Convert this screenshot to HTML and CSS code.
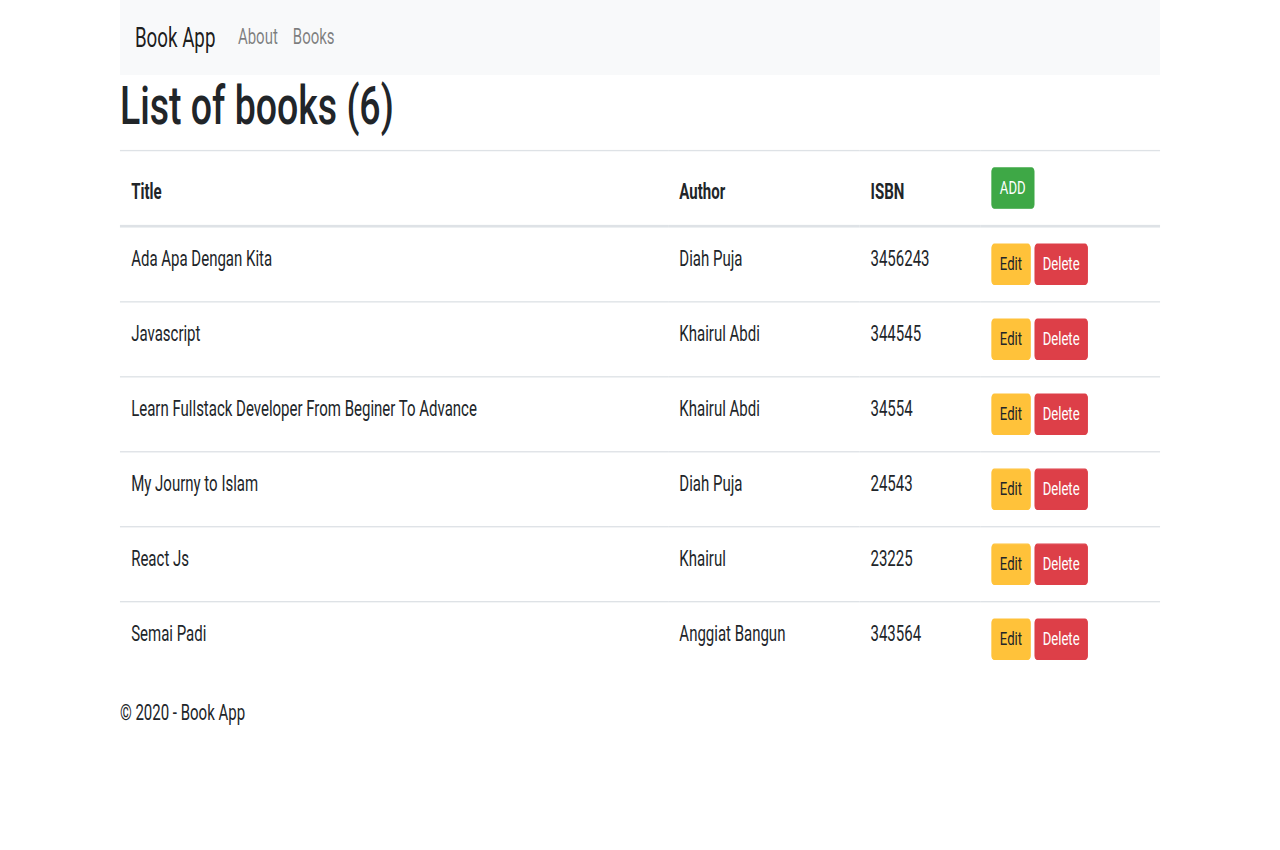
FILE: index.html
```html
<!DOCTYPE html>
<html lang="en">
<head>
<meta charset="utf-8">
<title>Book App</title>
<link rel="stylesheet" href="styles.css">
</head>
<body>
<div class="frame">
<div class="screen">
  <div class="container">
    <nav class="navbar">
      <a class="brand" href="#">Book App</a>
      <a class="nav-link" href="#">About</a>
      <a class="nav-link" href="#">Books</a>
    </nav>
    <h1 class="page-title">List of books (6)</h1>
    <table class="table">
      <thead>
        <tr>
          <th class="col-title">Title</th>
          <th class="col-author">Author</th>
          <th class="col-isbn">ISBN</th>
          <th class="col-actions"><button class="btn btn-success">ADD</button></th>
        </tr>
      </thead>
      <tbody>
        <tr>
          <td>Ada Apa Dengan Kita</td>
          <td>Diah Puja</td>
          <td>3456243</td>
          <td><div class="actions"><button class="btn btn-warning">Edit</button><button class="btn btn-danger">Delete</button></div></td>
        </tr>
        <tr>
          <td>Javascript</td>
          <td>Khairul Abdi</td>
          <td>344545</td>
          <td><div class="actions"><button class="btn btn-warning">Edit</button><button class="btn btn-danger">Delete</button></div></td>
        </tr>
        <tr>
          <td>Learn Fullstack Developer From Beginer To Advance</td>
          <td>Khairul Abdi</td>
          <td>34554</td>
          <td><div class="actions"><button class="btn btn-warning">Edit</button><button class="btn btn-danger">Delete</button></div></td>
        </tr>
        <tr>
          <td>My Journy to Islam</td>
          <td>Diah Puja</td>
          <td>24543</td>
          <td><div class="actions"><button class="btn btn-warning">Edit</button><button class="btn btn-danger">Delete</button></div></td>
        </tr>
        <tr>
          <td>React Js</td>
          <td>Khairul</td>
          <td>23225</td>
          <td><div class="actions"><button class="btn btn-warning">Edit</button><button class="btn btn-danger">Delete</button></div></td>
        </tr>
        <tr>
          <td>Semai Padi</td>
          <td>Anggiat Bangun</td>
          <td>343564</td>
          <td><div class="actions"><button class="btn btn-warning">Edit</button><button class="btn btn-danger">Delete</button></div></td>
        </tr>
      </tbody>
    </table>
    <footer class="footer">&copy; 2020 - Book App</footer>
  </div>
</div>
</div>
</body>
</html>
```

FILE: styles.css
```css
* { box-sizing: border-box; }

html {
  overflow: hidden;
}

body {
  margin: 0;
  padding: 0;
  background: #fff;
}

.frame {
  width: 1280px;
  height: 850px;
  overflow: hidden;
}

/* The reference was captured at 1366x635 and stretched to 1280x850 */
.screen {
  width: 1366px;
  transform: scale(0.93704, 1.33858);
  transform-origin: 0 0;
  font-family: Roboto, "Helvetica Neue", Arial, sans-serif;
  font-size: 16px;
  line-height: 1.5;
  color: #212529;
}

.container {
  max-width: 1140px;
  margin: 0 auto;
  padding: 0 15px;
}

.navbar {
  display: flex;
  align-items: center;
  padding: 8px 16px;
  background: #f8f9fa;
}

.brand {
  font-size: 20px;
  line-height: 30px;
  padding: 5px 0;
  margin-right: 16px;
  color: rgba(0, 0, 0, 0.9);
  text-decoration: none;
}

.nav-link {
  padding: 8px;
  color: rgba(0, 0, 0, 0.5);
  text-decoration: none;
}

.page-title {
  margin: 0 0 8px;
  font-size: 40px;
  font-weight: 500;
  line-height: 1.2;
}

.table {
  width: 100%;
  border-collapse: collapse;
  table-layout: fixed;
  margin-bottom: 16px;
}

.table th,
.table td {
  padding: 12px;
  border-top: 1px solid #dee2e6;
  text-align: left;
  vertical-align: top;
}

.table thead th {
  vertical-align: bottom;
  border-bottom: 2px solid #dee2e6;
  font-weight: 700;
}

.col-title { width: 585px; }
.col-author { width: 204px; }
.col-isbn { width: 129px; }
.col-actions { width: 192px; }

.actions {
  display: flex;
  gap: 4px;
}

.btn {
  display: inline-block;
  font-family: inherit;
  font-size: 14px;
  line-height: 1.5;
  padding: 4px 8px;
  border: 1px solid transparent;
  border-radius: 3.2px;
  cursor: pointer;
  vertical-align: middle;
}

.btn-success { background: #3ea846; border-color: #3ea846; color: #fff; }
.btn-warning { background: #ffc23a; border-color: #ffc23a; color: #212529; }
.btn-danger  { background: #dd3f48; border-color: #dd3f48; color: #fff; }

.footer {
  line-height: 24px;
}
```
